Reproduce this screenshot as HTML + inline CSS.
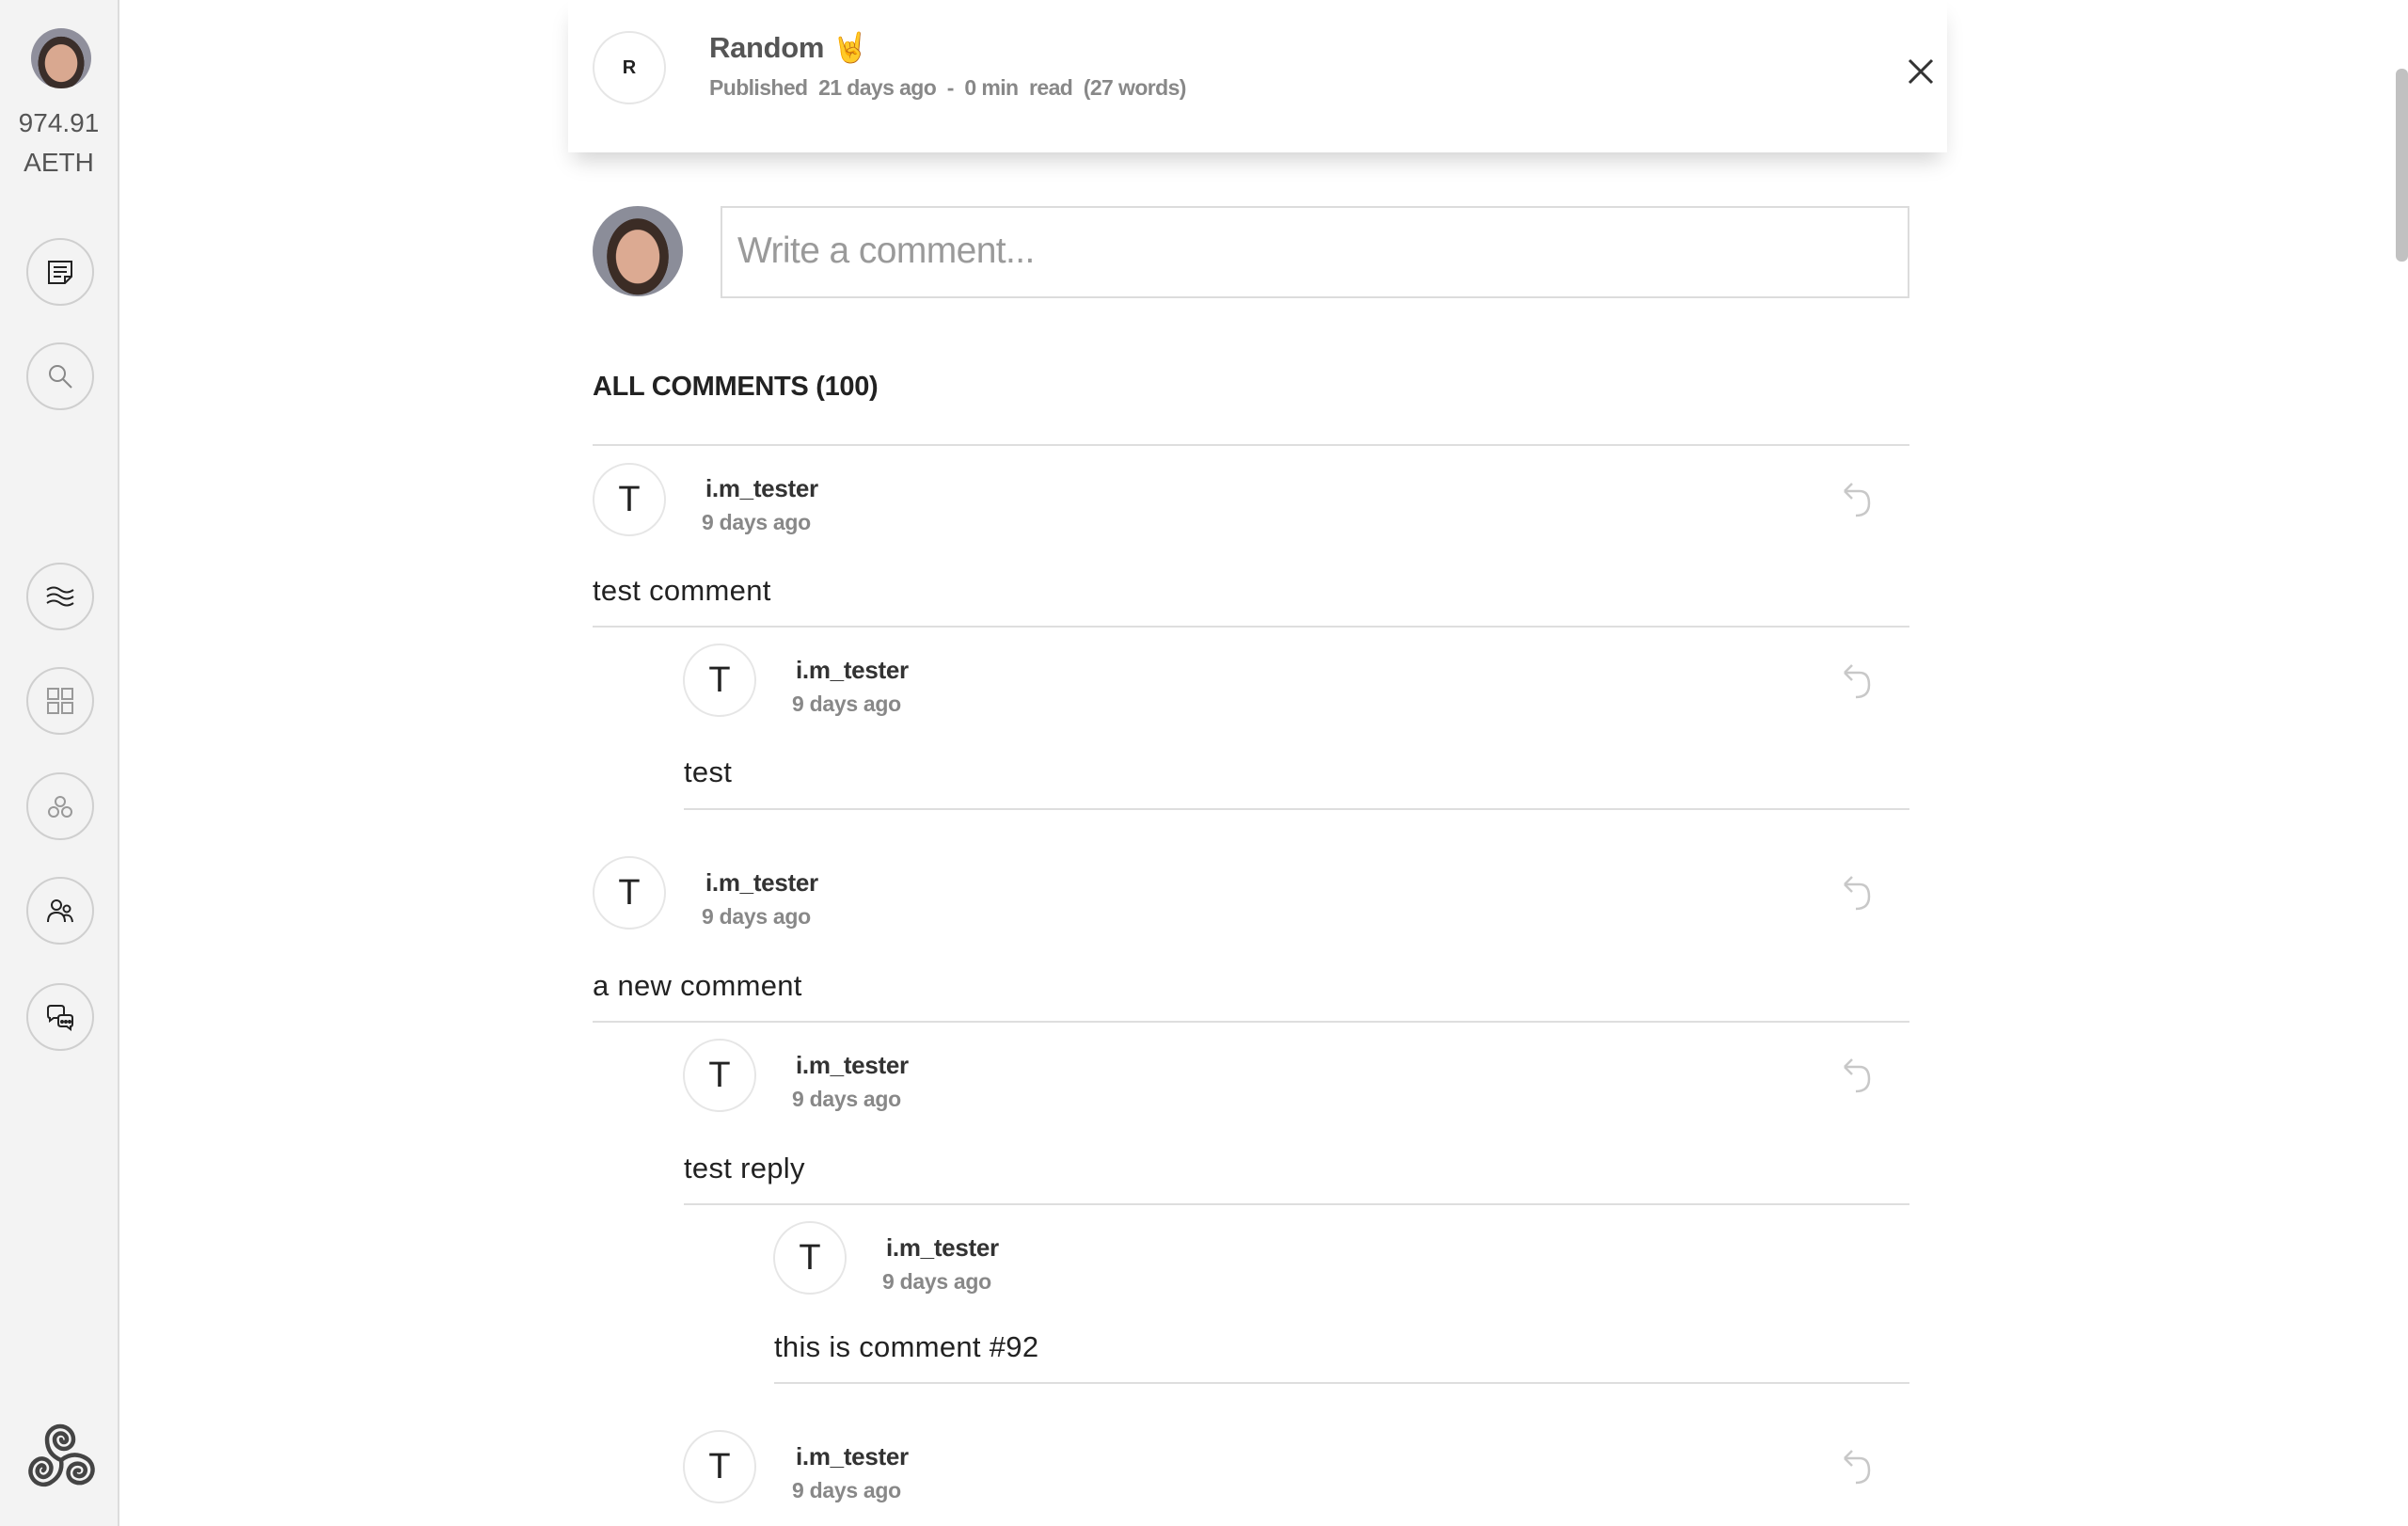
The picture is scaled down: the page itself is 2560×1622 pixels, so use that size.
<!DOCTYPE html>
<html><head><meta charset="utf-8"><style>
*{margin:0;padding:0;box-sizing:border-box}
body{width:2560px;height:1622px;overflow:hidden;background:#fff;font-family:"Liberation Sans",Arial,sans-serif;position:relative}
.a{position:absolute}
.side{left:0;top:0;width:127px;height:1622px;background:#f3f3f3;border-right:2px solid #dcdcdc}
.ib{position:absolute;left:28px;width:72px;height:72px;border:2px solid #cfcfcf;border-radius:50%;display:flex;align-items:center;justify-content:center}
.circ{position:absolute;border-radius:50%;border:2px solid #e6e6e6;background:#fff;display:flex;align-items:center;justify-content:center;color:#222}
.tc{width:78px;height:78px;font-size:38px}
.name{font-size:26px;font-weight:bold;color:#333;letter-spacing:-0.3px}
.date{font-size:23px;font-weight:bold;color:#888;letter-spacing:-0.3px}
.txt{font-size:31px;color:#222;letter-spacing:0.3px}
.hr{height:2px;background:#dedede}
</style></head><body>
<div class="a side">
 <div class="a" style="left:33px;top:30px;width:64px;height:64px;border-radius:50%;background:radial-gradient(ellipse 38% 44% at 50% 58%,#d9a890 0 70%,#3a2e2a 72% 100%,transparent 101%),#8f8f9c"></div>
 <div class="a" style="left:0;width:125px;top:110px;text-align:center;font-size:28px;color:#555;line-height:42px">974.91<br>AETH</div>
 <div class="ib" style="top:253px"><svg width="30" height="30" viewBox="0 0 30 30" fill="none" stroke="#222" stroke-width="2"><path d="M3 4h24v16l-7 7H3z M20 27v-7h7 M8 10h14 M8 15h14 M8 20h8"/></svg></div>
 <div class="ib" style="top:364px"><svg width="32" height="32" viewBox="0 0 32 32" fill="none" stroke="#888" stroke-width="2"><circle cx="13" cy="13" r="8"/><path d="M19 19l9 9"/></svg></div>
 <div class="ib" style="top:598px"><svg width="34" height="30" viewBox="0 0 34 30" fill="none" stroke="#222" stroke-width="2"><path d="M3 8q7-5 14 0t14 0 M3 15q7-5 14 0t14 0 M3 22q7-5 14 0t14 0"/></svg></div>
 <div class="ib" style="top:709px"><svg width="32" height="32" viewBox="0 0 32 32" fill="none" stroke="#999" stroke-width="2"><rect x="3" y="3" width="11" height="11"/><rect x="18" y="3" width="11" height="11"/><rect x="3" y="18" width="11" height="11"/><rect x="18" y="18" width="11" height="11"/></svg></div>
 <div class="ib" style="top:821px"><svg width="32" height="30" viewBox="0 0 32 30" fill="none" stroke="#999" stroke-width="2"><circle cx="16" cy="10" r="5"/><circle cx="9" cy="21" r="5"/><circle cx="23" cy="21" r="5"/></svg></div>
 <div class="ib" style="top:932px"><svg width="32" height="30" viewBox="0 0 32 30" fill="none" stroke="#222" stroke-width="2"><circle cx="12" cy="9" r="5"/><path d="M3 27q0-10 9-10t9 10"/><circle cx="23" cy="13" r="3.5"/><path d="M20 20q8-2 9 7"/></svg></div>
 <div class="ib" style="top:1045px"><svg width="32" height="30" viewBox="0 0 32 30" fill="none" stroke="#222" stroke-width="2"><path d="M3 6q0-3 3-3h11q3 0 3 3v7q0 3-3 3H9l-4 3v-3q-2 0-2-3z"/><path d="M14 16q0-3 3-3h9q3 0 3 3v6q0 3-2 3v3l-4-3h-6q-3 0-3-3z" fill="#f3f3f3"/><circle cx="18" cy="20" r="1" fill="#222"/><circle cx="22" cy="20" r="1" fill="#222"/><circle cx="26" cy="20" r="1" fill="#222"/></svg></div>
 <svg class="a" style="left:0;top:1480px" width="127" height="142" viewBox="0 0 127 142" fill="none" stroke="#444" stroke-width="4.5" stroke-linecap="round">
  <g id="sp"><path d="M65 50 A3 3 0 0 0 71 50 A6.5 6.5 0 0 0 58 50 A10 10 0 0 0 78 50 A14 14 0 0 0 50 50 Q50 66 65 72"/></g>
  <use href="#sp" transform="rotate(120 65 72)"/>
  <use href="#sp" transform="rotate(240 65 72)"/>
 </svg>
</div>
<div class="a" style="left:2547px;top:73px;width:13px;height:205px;background:#c1c1c1;border-radius:6px"></div>

<div class="a" style="left:604px;top:0;width:1466px;height:162px;background:#fff;box-shadow:0 14px 22px -6px rgba(0,0,0,0.18)"></div>
<div class="circ" style="left:630px;top:33px;width:78px;height:78px;font-size:20px;font-weight:bold">R</div>
<div class="a" style="left:754px;top:32px;font-size:31px;font-weight:bold;color:#555;letter-spacing:-0.3px">Random <span style="color:#f2b632">🤘</span></div>
<div class="a" style="left:754px;top:80px;font-size:23px;font-weight:bold;color:#888;letter-spacing:-0.6px">Published&nbsp; 21 days ago&nbsp; - &nbsp;0 min&nbsp; read&nbsp; (27 words)</div>
<svg class="a" style="left:2027px;top:61px" width="30" height="30" viewBox="0 0 30 30" stroke="#333" stroke-width="3"><path d="M3 3l24 24M27 3L3 27"/></svg>

<div class="a" style="left:630px;top:219px;width:96px;height:96px;border-radius:50%;background:radial-gradient(ellipse 34% 42% at 50% 56%,#dcaa92 0 70%,#3b2c25 72% 100%,transparent 101%),#8b8d99"></div>
<div class="a" style="left:766px;top:219px;width:1264px;height:98px;border:2px solid #dcdcdc;font-size:39px;color:#9a9a9a;padding:24px 0 0 16px;letter-spacing:-0.6px">Write a comment...</div>

<div class="a" style="left:630px;top:395px;font-size:29px;font-weight:bold;color:#222;letter-spacing:-0.3px">ALL COMMENTS (100)</div>
<div class="a hr" style="left:630px;top:472px;width:1400px"></div>

<svg width="0" height="0" style="position:absolute"><defs><path id="rp" d="M3 10l8-8M3 10l8 8M3 10h16q10 0 10 13t-14 13" fill="none" stroke="#c8c8c8" stroke-width="2.5"/></defs></svg>

<div class="circ tc" style="left:630px;top:492px">T</div>
<div class="a name" style="left:750px;top:504px">i.m_tester</div>
<div class="a date" style="left:746px;top:542px">9 days ago</div>
<svg class="a" style="left:1958px;top:512px" width="36" height="40"><use href="#rp"/></svg>
<div class="a txt" style="left:630px;top:610px">test comment</div>
<div class="a hr" style="left:630px;top:665px;width:1400px"></div>

<div class="circ tc" style="left:726px;top:684px">T</div>
<div class="a name" style="left:846px;top:697px">i.m_tester</div>
<div class="a date" style="left:842px;top:735px">9 days ago</div>
<svg class="a" style="left:1958px;top:705px" width="36" height="40"><use href="#rp"/></svg>
<div class="a txt" style="left:727px;top:803px">test</div>
<div class="a hr" style="left:727px;top:859px;width:1303px"></div>

<div class="circ tc" style="left:630px;top:910px">T</div>
<div class="a name" style="left:750px;top:923px">i.m_tester</div>
<div class="a date" style="left:746px;top:961px">9 days ago</div>
<svg class="a" style="left:1958px;top:930px" width="36" height="40"><use href="#rp"/></svg>
<div class="a txt" style="left:630px;top:1030px">a new comment</div>
<div class="a hr" style="left:630px;top:1085px;width:1400px"></div>

<div class="circ tc" style="left:726px;top:1104px">T</div>
<div class="a name" style="left:846px;top:1117px">i.m_tester</div>
<div class="a date" style="left:842px;top:1155px">9 days ago</div>
<svg class="a" style="left:1958px;top:1124px" width="36" height="40"><use href="#rp"/></svg>
<div class="a txt" style="left:727px;top:1224px">test reply</div>
<div class="a hr" style="left:727px;top:1279px;width:1303px"></div>

<div class="circ tc" style="left:822px;top:1298px">T</div>
<div class="a name" style="left:942px;top:1311px">i.m_tester</div>
<div class="a date" style="left:938px;top:1349px">9 days ago</div>
<div class="a txt" style="left:823px;top:1414px">this is comment #92</div>
<div class="a hr" style="left:823px;top:1469px;width:1207px"></div>

<div class="circ tc" style="left:726px;top:1520px">T</div>
<div class="a name" style="left:846px;top:1533px">i.m_tester</div>
<div class="a date" style="left:842px;top:1571px">9 days ago</div>
<svg class="a" style="left:1958px;top:1540px" width="36" height="40"><use href="#rp"/></svg>
</body></html>
